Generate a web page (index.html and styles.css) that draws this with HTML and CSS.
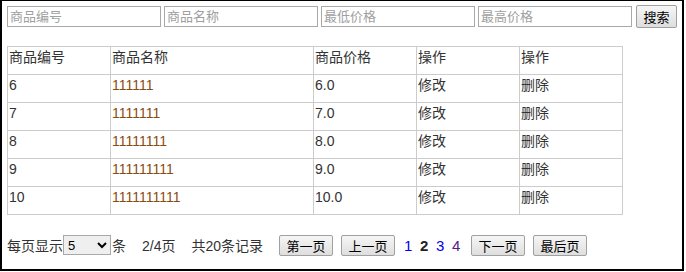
FILE: index.html
```html
<!DOCTYPE html>
<html lang="zh-cn">
<head>
  <meta charset="UTF-8" />
  <title>商品列表</title>
  <link rel="stylesheet" href="styles.css">
</head>
<body>
  <div class="frame">
    <form class="search">
      <input type="text" placeholder="商品编号" />
      <input type="text" placeholder="商品名称" />
      <input type="text" placeholder="最低价格" />
      <input type="text" placeholder="最高价格" />
      <button type="button">搜索</button>
    </form>

    <table class="goods">
      <tr><th>商品编号</th><th>商品名称</th><th>商品价格</th><th>操作</th><th>操作</th></tr>
      <tr><td>6</td><td class="name">111111</td><td>6.0</td><td>修改</td><td>删除</td></tr>
      <tr><td>7</td><td class="name">1111111</td><td>7.0</td><td>修改</td><td>删除</td></tr>
      <tr><td>8</td><td class="name">11111111</td><td>8.0</td><td>修改</td><td>删除</td></tr>
      <tr><td>9</td><td class="name">111111111</td><td>9.0</td><td>修改</td><td>删除</td></tr>
      <tr><td>10</td><td class="name">1111111111</td><td>10.0</td><td>修改</td><td>删除</td></tr>
    </table>

    <div class="pager">
      <span>每页显示</span>
      <select><option>5</option><option>10</option></select>
      <span>条</span>
      <span class="gap">2/4页</span>
      <span class="gap">共20条记录</span>
      <button type="button" class="first">第一页</button>
      <button type="button">上一页</button>
      <a href="#">1</a>
      <b>2</b>
      <a href="#">3</a>
      <a href="#" class="seen">4</a>
      <button type="button">下一页</button>
      <button type="button">最后页</button>
    </div>
  </div>
</body>
</html>
```

FILE: styles.css
```css
* {
  box-sizing: border-box;
}

body {
  margin: 0;
  font-family: "Liberation Sans", "Noto Sans CJK SC", sans-serif;
  font-size: 14px;
  color: #333;
  background: #fff;
}

.frame {
  width: 684px;
  height: 271px;
  border: 2px solid #000;
  border-top-width: 1px;
  padding: 3px 5px 0 5px;
}

.search {
  display: flex;
  align-items: center;
  height: 24px;
}

.search input {
  width: 154px;
  height: 21px;
  margin-right: 3px;
  padding: 0 2px;
  border: 1px solid #a9a9a9;
  font-family: inherit;
  font-size: 13px;
}

.search input::placeholder {
  color: #a0a0a0;
}

.search button {
  margin-left: 1px;
  height: 23px;
  width: 42px;
  padding: 0;
}

button {
  font-family: "Liberation Sans", "Noto Sans CJK SC", sans-serif;
  font-size: 13px;
  color: #000;
  background: linear-gradient(#f6f6f6, #dedede);
  border: 1px solid #a0a0a0;
  border-radius: 2px;
  padding: 0 6px;
  height: 22px;
  white-space: nowrap;
}

.goods {
  margin-top: 18px;
  border-collapse: collapse;
  width: 616px;
}

.goods th,
.goods td {
  border: 1px solid #cccccc;
  height: 28px;
  padding: 0 1px 6px;
  text-align: left;
  font-weight: normal;
  vertical-align: top;
  line-height: 20px;
}

.goods th:nth-child(1) { width: 103px; }
.goods th:nth-child(2) { width: 203px; }
.goods th:nth-child(3),
.goods th:nth-child(4),
.goods th:nth-child(5) { width: 103px; }

.goods .name {
  color: #8a4b10;
}

.pager {
  display: flex;
  align-items: center;
  margin-top: 18px;
  height: 24px;
}

.pager select {
  width: 48px;
  height: 20px;
  font-family: inherit;
  font-size: 13px;
  border: 1px solid #a9a9a9;
  margin: 0 1px 0 0;
}

.pager .gap {
  margin-left: 16px;
}

.pager .first {
  margin-left: 16px;
}

.pager button {
  width: 54px;
  padding: 0;
  margin-right: 8px;
  height: 21px;
}

.pager a,
.pager b {
  font-size: 15px;
  margin: 0 2px 0 1px;
  width: 13px;
}

.pager a {
  color: #0000ee;
  text-decoration: none;
}

.pager a.seen {
  color: #551a8b;
  margin-right: 6px;
}

.pager b {
  color: #222;
}
```
